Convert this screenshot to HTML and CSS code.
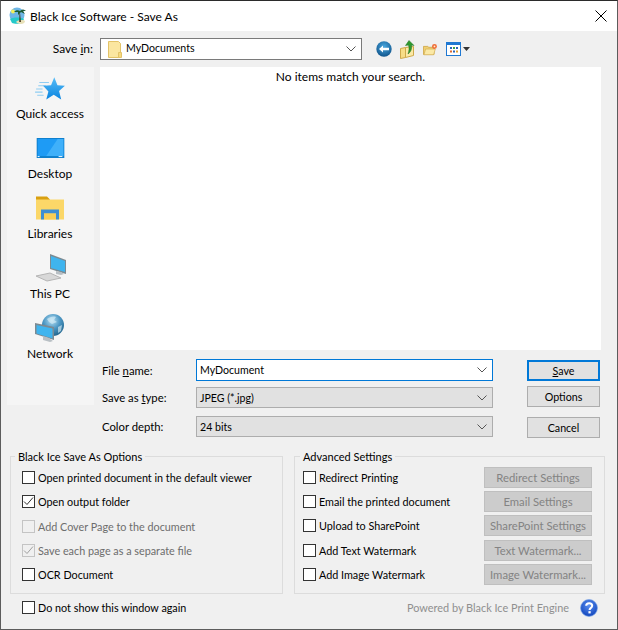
FILE: index.html
```html
<!DOCTYPE html>
<html lang="en">
<head>
<meta charset="utf-8">
<title>Black Ice Software - Save As</title>
<link rel="stylesheet" href="styles.css">
</head>
<body>
<div class="window">
  <header class="titlebar">
    <svg class="title-icon" width="18" height="18" viewBox="0 0 18 18"><circle cx="8" cy="8" r="7.5" fill="#6fb6e6"/><circle cx="4" cy="4.500" r="2" fill="#f4ee5a"/><path d="M1 12c3-2 11-2 14 0l-2 4c-3 1-8 1-10 0z" fill="#25c9c9"/><path d="M7 15c1-2 7-3 9-1 0 2-2 3-4 3s-4-1-5-2z" fill="#e8e0b8"/><path d="M11 6l1 9h-1.800l.3-9z" fill="#4a3a20"/><path d="M5 5c2-2 4-2 6-1 2-2 4-2 6 0l-3 0 2 3-4-2-3 3 0-3z" fill="#1c5a32"/></svg>
    <span class="title-text">Black Ice Software - Save As</span>
    <svg class="close" width="12" height="12" viewBox="0 0 12 12"><path d="M.5.500l11 11M11.500.500l-11 11" stroke="#000" fill="none"/></svg>
  </header>

  <div class="savein">
    <label class="savein-label">Save <u>i</u>n:</label>
    <div class="combo combo-white combo-folder">
      <svg width="14" height="17" viewBox="0 0 14 17"><path d="M.500.500h10l2 2v14h-12z" fill="#fbe6a0" stroke="#e3c368"/><path d="M10.500 11.500h3v5h-3z" fill="#f7d97e" stroke="#e3c368"/></svg>
      <span class="combo-text">MyDocuments</span>
      <svg class="chev" width="10" height="6" viewBox="0 0 10 6"><path d="M.500.500l4.500 4.500 4.500-4.500" fill="none" stroke="#555"/></svg>
    </div>
    <div class="tools">
      <svg width="16" height="16" viewBox="0 0 16 16"><defs><radialGradient id="bk" cx=".5" cy=".35" r=".7"><stop offset="0" stop-color="#4aa8e0"/><stop offset="1" stop-color="#0c4f86"/></radialGradient></defs><circle cx="8" cy="8" r="7.700" fill="url(#bk)"/><path d="M3 8l4-3.500v2.300h6v2.400h-6v2.300z" fill="#fff"/></svg>
      <svg width="15" height="19" viewBox="0 0 15 19"><path d="M.500 8.500l5-1v10l-5 1z" fill="#f7dd86" stroke="#cfa94a"/><path d="M5.500 7.500l8-1v9l-8 2z" fill="#fbe9a6" stroke="#cfa94a"/><path d="M9 .500l5 5-2.500-.5c.5 4-.5 7-3.500 9 1-3 1.500-6 .5-9l-3 .5z" fill="#2e9a2e" stroke="#1d6e1d" stroke-width=".5"/></svg>
      <svg width="15" height="13" viewBox="0 0 17 14"><path d="M.500 3.500h5l1 1h6v8h-12z" fill="#f0cf72" stroke="#cfa94a"/><path d="M3 6.500h11l-2 6.500h-11z" fill="#fbe9a6" stroke="#cfa94a" stroke-width=".7"/><circle cx="13" cy="3.500" r="2.800" fill="#ef6c3a"/><circle cx="13" cy="3.500" r="1" fill="#fff2c8"/></svg>
      <span class="view">
        <svg width="15" height="14" viewBox="0 0 15 14"><rect x=".5" y=".5" width="14" height="13" fill="#fff" stroke="#1f78d2"/><rect x="1" y="1" width="13" height="2" fill="#1f78d2"/><path d="M4 5h2v2h-2z" fill="#2a62b8"/><path d="M7 5h2v2h-2z" fill="#3aa04a"/><path d="M10 5h2v2h-2z" fill="#2a62b8"/><path d="M4 8.500h2v2h-2z" fill="#e06a30"/><path d="M7 8.500h2v2h-2z" fill="#2a62b8"/><path d="M10 8.500h2v2h-2z" fill="#e0a030"/></svg>
        <svg width="7" height="4" viewBox="0 0 7 4"><path d="M0 0h7l-3.500 4z" fill="#333"/></svg>
      </span>
    </div>
  </div>

  <div class="main">
    <nav class="places">
      <div class="place place-quick">
        <svg width="32" height="28" viewBox="0 0 30 26"><defs><linearGradient id="st" x1="0" y1="0" x2="0" y2="1"><stop offset="0" stop-color="#58bdf7"/><stop offset="1" stop-color="#0a84e0"/></linearGradient></defs><path d="M5 6h9M4 9h7M2 12h6M1 15h7M3 18h6" stroke="#8fcdf2" fill="none"/><path d="M19 1l3 7.500 7 .5-5.500 5 2 8-7-4.500-7 4.500 2-7.500-5-5.500 7.500-.5z" fill="url(#st)"/></svg>
        <span>Quick access</span>
      </div>
      <div class="place place-desktop">
        <svg width="29" height="20" viewBox="0 0 29 21"><rect width="29" height="21" fill="#0f7fcc"/><rect x="1" y="1" width="27" height="18" fill="#1e9bf5"/><path d="M10 19l12-18h6v18z" fill="#3fb0fa"/><path d="M1 19.500h2M23 19.500h4" stroke="#fff"/></svg>
        <span>Desktop</span>
      </div>
      <div class="place place-libs">
        <svg width="28" height="24" viewBox="0 0 28 23"><path d="M0 0h11l3 3v4h-14z" fill="#d9a010"/><path d="M0 3h28v20h-28z" fill="#fbd768"/><path d="M5 13h18v10h-3v-6h-12v6h-3z" fill="#3f8fd2"/><path d="M8 17h12v6h-12z" fill="#f9ce55"/></svg>
        <span>Libraries</span>
      </div>
      <div class="place place-pc">
        <svg width="32" height="28" viewBox="0 0 32 28"><path d="M2 22l14-3 11 5-14 3z" fill="#d8d8d8" stroke="#b5b5b5"/><path d="M16 0l16 6v14l-16-5z" fill="#7c8a92"/><path d="M17 2l14 5v11l-14-4z" fill="#3fb4ee"/><path d="M22 17v3l5 1 3-1-3-2z" fill="#b8bfc4"/></svg>
        <span>This PC</span>
      </div>
      <div class="place place-net">
        <svg width="30" height="29" viewBox="0 0 30 29"><defs><radialGradient id="gl" cx=".45" cy=".3" r=".75"><stop offset="0" stop-color="#b6dff2"/><stop offset=".5" stop-color="#4c97c4"/><stop offset="1" stop-color="#1d5f86"/></radialGradient></defs><circle cx="18" cy="11" r="11" fill="url(#gl)"/><path d="M12 5c3-2 6-3 9-2l-2 3 3 2-5 2-3-2zM23 13l4-2-1 6-3 2z" fill="#d8eef8" opacity=".65"/><path d="M0 9l19 4v13l-19-6z" fill="#7c8a92"/><path d="M1.500 11l16 3.500v10l-16-5z" fill="#3fb4ee"/><path d="M8 22v4l7 2 3-1-3-2-1-1z" fill="#b8bfc4"/></svg>
        <span>Network</span>
      </div>
    </nav>

    <div class="browser">
      <div class="filelist">No items match your search.</div>
      <div class="form">
        <div class="fields">
          <div class="field">
            <label class="field-label">File <u>n</u>ame:</label>
            <div class="combo combo-input">
              <span class="combo-text">MyDocument</span>
              <svg class="chev" width="10" height="6" viewBox="0 0 10 6"><path d="M.500.500l4.500 4.500 4.500-4.500" fill="none" stroke="#555"/></svg>
            </div>
          </div>
          <div class="field field-type">
            <label class="field-label">Save as <u>t</u>ype:</label>
            <div class="combo combo-gray">
              <span class="combo-text">JPEG (*.jpg)</span>
              <svg class="chev" width="10" height="6" viewBox="0 0 10 6"><path d="M.500.500l4.500 4.500 4.500-4.500" fill="none" stroke="#555"/></svg>
            </div>
          </div>
          <div class="field field-depth">
            <label class="field-label">Color depth:</label>
            <div class="combo combo-gray">
              <span class="combo-text">24 bits</span>
              <svg class="chev" width="10" height="6" viewBox="0 0 10 6"><path d="M.500.500l4.500 4.500 4.500-4.500" fill="none" stroke="#555"/></svg>
            </div>
          </div>
        </div>
        <div class="actions">
          <button class="btn btn-default"><u>S</u>ave</button>
          <button class="btn btn-options">Options</button>
          <button class="btn btn-cancel">Cancel</button>
        </div>
      </div>
    </div>
  </div>

  <div class="groups">
    <fieldset class="group group-left">
      <legend>Black Ice Save As Options</legend>
      <div class="check"><i class="box"></i><span>Open printed document in the default viewer</span></div>
      <div class="check"><i class="box"><svg width="11" height="11" viewBox="0 0 11 11"><path d="M1 5.500l3 3 6-7" fill="none" stroke="#333" stroke-width="1"/></svg></i><span>Open output folder</span></div>
      <div class="check check-off"><i class="box"></i><span>Add Cover Page to the document</span></div>
      <div class="check check-off"><i class="box"><svg width="11" height="11" viewBox="0 0 11 11"><path d="M1 5.500l3 3 6-7" fill="none" stroke="#a0a0a0" stroke-width="1"/></svg></i><span>Save each page as a separate file</span></div>
      <div class="check"><i class="box"></i><span>OCR Document</span></div>
    </fieldset>
    <fieldset class="group group-right">
      <legend>Advanced Settings</legend>
      <div class="adv"><div class="check"><i class="box"></i><span>Redirect Printing</span></div><button class="btn-off">Redirect Settings</button></div>
      <div class="adv"><div class="check"><i class="box"></i><span>Email the printed document</span></div><button class="btn-off">Email Settings</button></div>
      <div class="adv"><div class="check"><i class="box"></i><span>Upload to SharePoint</span></div><button class="btn-off">SharePoint Settings</button></div>
      <div class="adv"><div class="check"><i class="box"></i><span>Add Text Watermark</span></div><button class="btn-off">Text Watermark...</button></div>
      <div class="adv"><div class="check"><i class="box"></i><span>Add Image Watermark</span></div><button class="btn-off">Image Watermark...</button></div>
    </fieldset>
  </div>

  <footer class="foot">
    <div class="check"><i class="box"></i><span>Do not show this window again</span></div>
    <span class="powered">Powered by Black Ice Print Engine</span>
    <svg class="help" width="18" height="18" viewBox="0 0 16 16"><defs><radialGradient id="hp" cx=".5" cy=".35" r=".7"><stop offset="0" stop-color="#5b8ff0"/><stop offset="1" stop-color="#0b3fb8"/></radialGradient></defs><circle cx="8" cy="8" r="7.500" fill="url(#hp)" stroke="#7fa8e8" stroke-width=".6"/><path d="M5.500 6c0-3 5.300-3 5.300 0 0 2-2.300 1.800-2.300 3.800" fill="none" stroke="#fff" stroke-width="1.800"/><rect x="7.500" y="10.800" width="2" height="2" fill="#fff"/></svg>
  </footer>
</div>
</body>
</html>
```
FILE: styles.css
```css
* { box-sizing: border-box; }
html, body { margin: 0; padding: 0; }
body {
  width: 618px;
  height: 630px;
  overflow: hidden;
  font-family: Lato, "Open Sans", sans-serif;
  font-size: 10.900px;
  color: #000;
}
u { text-underline-offset: 1px; }
.window {
  width: 618px;
  height: 630px;
  background: #f0f0f0;
  border: 1px solid #5c5c5c;
  border-top-color: #2b2b2b;
}
.titlebar {
  height: 30px;
  background: #fff;
  display: flex;
  align-items: center;
  padding: 0 10px 0 8px;
}
.title-icon { margin-right: 3px; }
.title-text { font-size: 12px; flex: 1; }
.savein {
  display: flex;
  align-items: center;
  margin-top: 7px;
  height: 22px;
}
.savein-label { width: 92px; text-align: right; margin-right: 7px; font-size: 12px; padding-bottom: 2px; }
.combo {
  display: flex;
  align-items: center;
  height: 22px;
  border: 1px solid #7a7a7a;
  padding: 0 4px 0 3px;
  background: #fff;
}
.combo-text { flex: 1; font-size: 10.600px; }
.combo-folder { width: 262px; padding-left: 7px; }
.combo-folder .combo-text { margin-left: 4px; padding-bottom: 2px; }
.chev { margin-right: 1px; }
.tools { display: flex; align-items: center; margin-left: 14px; gap: 8px; }
.view { display: flex; align-items: center; gap: 2px; margin-left: 0; }
.main { display: flex; margin-top: 7px; }
.places {
  width: 87px;
  height: 338px;
  margin-left: 6px;
  background: #f5f5f5;
  display: flex;
  flex-direction: column;
  padding-top: 5px;
  font-size: 12px;
}
.place {
  height: 60px;
  display: flex;
  flex-direction: column;
  align-items: center;
  justify-content: flex-end;
  padding-bottom: 10.600px;
  margin-left: -1px;
}
.place-quick svg { margin-bottom: 2px; }
.place-desktop svg { margin-bottom: 8px; }
.place-libs svg { margin-bottom: 6px; }
.place-pc svg { margin-bottom: 4px; }
.place-net svg { margin-bottom: 3px; }
.browser { margin-left: 6px; width: 501px; }
.filelist {
  background: #fff;
  height: 283px;
  text-align: center;
  padding-top: 2px;
  font-size: 12px;
}
.form { display: flex; margin-top: 9px; }
.fields { width: 393px; }
.field { display: flex; align-items: center; height: 22px; }
.field-type { margin-top: 6px; height: 21px; }
.field-depth { margin-top: 8px; height: 21px; }
.field-label { width: 96px; padding-left: 2px; font-size: 11.300px; }
.combo-input, .combo-gray { width: 297px; }
.combo-input { border-color: #0078d7; }
.combo-gray { background: #e1e1e1; border-color: #adadad; height: 21px; }
.actions { margin-left: 34px; padding-top: 1px; display: flex; flex-direction: column; }
.btn {
  width: 73px;
  height: 21px;
  font: inherit;
  font-size: 10.700px;
  color: #000;
  background: #e1e1e1;
  border: 1px solid #adadad;
  padding: 0;
}
.btn-default { border: 2px solid #0078d7; }
.btn-options { margin-top: 5px; }
.btn-cancel { margin-top: 10px; }
.groups {
  display: flex;
  margin: 11px 0 0 9px;
  gap: 11px;
}
.group {
  margin: 0;
  height: 145px;
  border: 1px solid #dcdcdc;
  padding: 0;
}
.group legend { padding: 0 3px; line-height: 15px; font-size: 11px; }
.group-left { width: 273px; padding: 5px 0 0 11px; }
.group-left legend { margin-left: -7px; }
.group-right { width: 311px; padding: 1px 0 0 8px; }
.group-right legend { margin-left: -3px; }
.check { display: flex; align-items: center; height: 17px; margin-bottom: 7.300px; font-size: 10.800px; }
.box {
  width: 13px;
  height: 13px;
  background: #fff;
  border: 1px solid #333;
  margin-right: 3px;
  display: flex;
  align-items: center;
  justify-content: center;
  flex: none;
}
.check-off { color: #6d6d6d; }
.check-off .box { border-color: #c4c4c4; background: #f0f0f0; }
.adv { display: flex; justify-content: space-between; align-items: center; height: 24.400px; width: 289px; }
.adv .check { margin: 0; }
.btn-off {
  width: 108px;
  height: 21px;
  font: inherit;
  font-size: 11.300px;
  color: #838383;
  background: #ccc;
  border: 1px solid #bfbfbf;
  padding: 0;
  white-space: nowrap;
  overflow: hidden;
}
.foot {
  display: flex;
  align-items: center;
  margin: 5px 0 0 21px;
  height: 17px;
}
.foot .check { margin: 0; flex: 1; }
.powered { color: #8f8f8f; margin-right: 11px; }
.help { margin-right: 19px; }
```
